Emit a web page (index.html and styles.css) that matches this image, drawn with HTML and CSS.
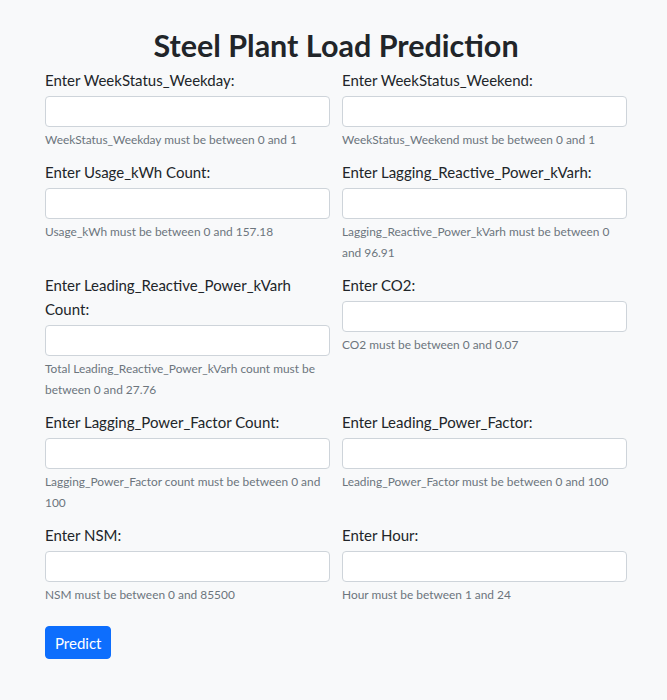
FILE: index.html
```html
<!DOCTYPE html>
<html lang="en">
<head>
<meta charset="utf-8">
<title>Steel Plant Load Prediction</title>
<link rel="stylesheet" href="styles.css">
</head>
<body>
<main class="page">
  <h1 class="title">Steel Plant Load Prediction</h1>
  <form class="form">
    <div class="grid">
      <div class="group">
        <label class="label">Enter WeekStatus_Weekday:</label>
        <input class="input" type="text">
        <small class="help">WeekStatus_Weekday must be between 0 and 1</small>
      </div>
      <div class="group">
        <label class="label">Enter WeekStatus_Weekend:</label>
        <input class="input" type="text">
        <small class="help">WeekStatus_Weekend must be between 0 and 1</small>
      </div>
      <div class="group">
        <label class="label">Enter Usage_kWh Count:</label>
        <input class="input" type="text">
        <small class="help">Usage_kWh must be between 0 and 157.18</small>
      </div>
      <div class="group">
        <label class="label">Enter Lagging_Reactive_Power_kVarh:</label>
        <input class="input" type="text">
        <small class="help">Lagging_Reactive_Power_kVarh must be between 0 and 96.91</small>
      </div>
      <div class="group">
        <label class="label">Enter Leading_Reactive_Power_kVarh Count:</label>
        <input class="input" type="text">
        <small class="help">Total Leading_Reactive_Power_kVarh count must be between 0 and 27.76</small>
      </div>
      <div class="group">
        <label class="label">Enter CO2:</label>
        <input class="input" type="text">
        <small class="help">CO2 must be between 0 and 0.07</small>
      </div>
      <div class="group">
        <label class="label">Enter Lagging_Power_Factor Count:</label>
        <input class="input" type="text">
        <small class="help">Lagging_Power_Factor count must be between 0 and 100</small>
      </div>
      <div class="group">
        <label class="label">Enter Leading_Power_Factor:</label>
        <input class="input" type="text">
        <small class="help">Leading_Power_Factor must be between 0 and 100</small>
      </div>
      <div class="group">
        <label class="label">Enter NSM:</label>
        <input class="input" type="text">
        <small class="help">NSM must be between 0 and 85500</small>
      </div>
      <div class="group">
        <label class="label">Enter Hour:</label>
        <input class="input" type="text">
        <small class="help">Hour must be between 1 and 24</small>
      </div>
    </div>
    <button class="btn" type="button">Predict</button>
  </form>
</main>
</body>
</html>
```
FILE: styles.css
```css
* { box-sizing: border-box; }
body {
  margin: 0;
  background: #f8f9fa;
  color: #212529;
  font-family: "Lato", "Open Sans", sans-serif;
}
.page {
  width: 582px;
  margin-left: 45px;
  padding-top: 26px;
}
.title {
  margin: 0 0 4px;
  text-align: center;
  font-size: 30.5px;
  font-weight: 700;
  line-height: 38px;
}
.grid {
  display: grid;
  grid-template-columns: 1fr 1fr;
  column-gap: 12px;
  align-items: start;
}
.group {
  display: flex;
  flex-direction: column;
  margin-bottom: 10px;
  font-size: 14px;
  line-height: 21px;
}
.label {
  font-size: 15px;
  line-height: 24px;
  margin-bottom: 4px;
}
.input {
  height: 31px;
  border: 1px solid #ced4da;
  border-radius: 4px;
  background: #fff;
  font: inherit;
}
.help {
  font-size: 11.9px;
  color: #6c757d;
  line-height: 21px;
  padding-top: 2px;
}
.btn {
  margin-top: 11px;
  height: 33px;
  padding: 0 9px;
  border: 1px solid #0d6efd;
  border-radius: 4px;
  background: #0d6efd;
  color: #fff;
  font-family: inherit;
  font-size: 15px;
}
```
